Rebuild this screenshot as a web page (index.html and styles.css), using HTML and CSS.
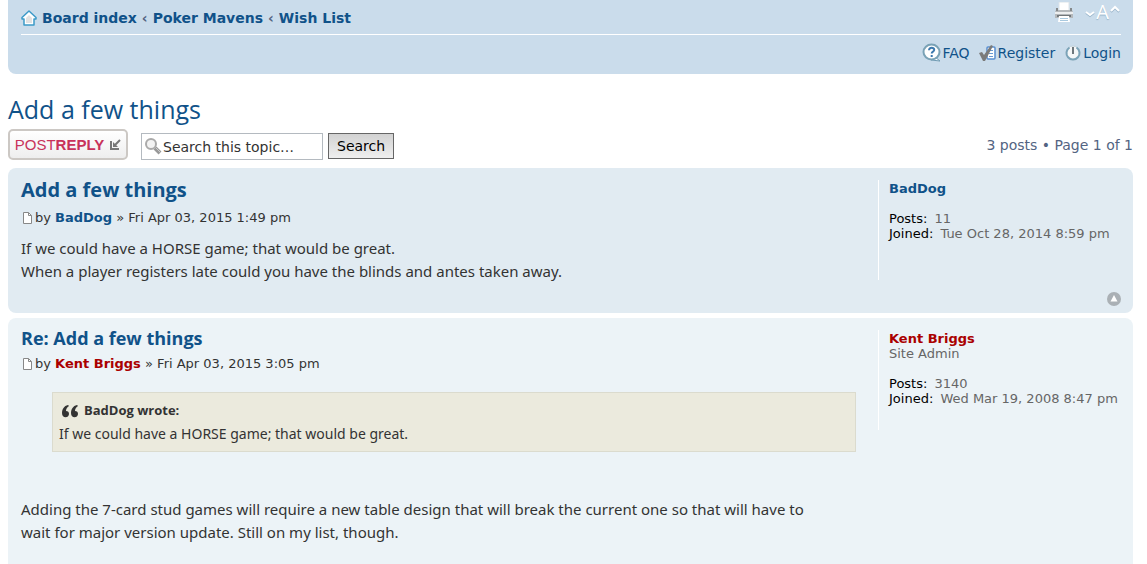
FILE: index.html
```html
<!DOCTYPE html>
<html lang="en">
<head>
    <meta charset="UTF-8">
    <meta name="viewport" content="width=device-width, initial-scale=1.0">
    <title>Add a few things</title>
    <link rel="stylesheet" href="styles.css">
</head>
<body>
    <!-- Navigation -->
    <div class="navbar">
        <div class="nav-row nav-top">
            <div class="breadcrumbs">
                <svg width="16" height="16" viewBox="0 0 16 16">
                    <path d="M8 1L1 7.500V9h2v6h10V9h2V7.500z" fill="#fff" stroke="#3c9ac8" stroke-width="1.500" stroke-linejoin="round"/>
                    <path d="M8 5l-3 3v5h6V8z" fill="#e2e2e2"/>
                </svg>
                <a href="#">Board index</a> <span>‹</span> <a href="#">Poker Mavens</a> <span>‹</span> <a href="#">Wish List</a>
            </div>
            <div class="tools">
                <a href="#" aria-label="Print view">
                    <svg width="20" height="20" viewBox="0 0 20 20">
                        <path d="M5 0h10v9H5z" fill="#fff" stroke="#dce3e8"/>
                        <path d="M2 8h16l1 2v6H1v-6z" fill="#b4b8bb"/>
                        <path d="M1 10h18v2H1z" fill="#eceeef"/>
                        <path d="M3 13h14v2H3z" fill="#707679"/>
                        <path d="M5 14h10l1 6H4z" fill="#fff"/>
                        <path d="M6 16.500h8M6 18.500h8" stroke="#a9c9df"/>
                        <path d="M2 6h2v3H2zM16 6h2v3h-2z" fill="#85898b"/>
                    </svg>
                </a>
                <a href="#" class="font-size" aria-label="Change font size">
                    <svg width="12" height="20" viewBox="0 0 12 20"><path d="M2 11l4 3 4-3" fill="none" stroke="#98b4ca" stroke-width="2"/><path d="M2 10l4 3 4-3" fill="none" stroke="#fff" stroke-width="2"/></svg>
                    <span>A</span>
                    <svg width="12" height="20" viewBox="0 0 12 20"><path d="M2 10l4-4 4 4" fill="none" stroke="#98b4ca" stroke-width="2"/><path d="M2 9l4-4 4 4" fill="none" stroke="#fff" stroke-width="2"/></svg>
                </a>
            </div>
        </div>
        <div class="nav-row nav-links">
            <a href="#">
                <svg width="20" height="20" viewBox="0 0 20 20">
                    <path d="M13 14l5 4-9-1z" fill="#fff" stroke="#6f9bb3"/>
                    <ellipse cx="9.500" cy="9" rx="8" ry="7.500" fill="#fff" stroke="#7aa2b6" stroke-width="2"/>
                    <path d="M7 7.200c0-3.300 5.500-3 5.200-.2-.2 1.700-2.500 1.600-2.500 3.500M9.700 12v2" fill="none" stroke="#3d79ae" stroke-width="2"/>
                </svg>FAQ</a>
            <a href="#">
                <svg width="20" height="20" viewBox="0 0 20 20">
                    <rect x="9" y="4" width="8" height="12" rx="1" fill="#fff" stroke="#5a8fd0" stroke-width="1.500"/>
                    <path d="M11 7.500h4M11 10.500h4M11 13.500h4" stroke="#6899d3"/>
                    <path d="M1 10l3-1 2 3 7-10 2 1L7 18H5z" fill="#7b7b7b"/>
                </svg>Register</a>
            <a href="#">
                <svg width="20" height="20" viewBox="0 0 20 20">
                    <circle cx="10" cy="10" r="7" fill="#f5f7f8" stroke="#c2d2da"/>
                    <path d="M6.500 4.500a6.500 6.500 0 1 0 7 0" fill="none" stroke="#7ba3b8" stroke-width="2"/>
                    <path d="M10 4v7" stroke="#6e777c" stroke-width="2"/>
                </svg>Login</a>
        </div>
    </div>

    <h2><a href="#">Add a few things</a></h2>

    <!-- Topic actions -->
    <div class="topic-actions">
        <button type="button" class="reply-button"><span>POST<b>REPLY</b></span>
            <svg width="12" height="12" viewBox="0 0 12 12"><path d="M2 2v8h8" fill="none" stroke="#777" stroke-width="2"/><path d="M4 3v5h5z" fill="#777"/><path d="M5 7l6-6" stroke="#777" stroke-width="2"/></svg>
        </button>
        <form class="search" onsubmit="return false;">
            <div class="search-box">
                <svg width="18" height="18" viewBox="0 0 18 18">
                    <path d="M11 10l5 5" stroke="#999" stroke-width="4"/>
                    <path d="M12 10l4 4" stroke="#ccc"/>
                    <circle cx="7" cy="6" r="5" fill="#f3f3f3" stroke="#aaa" stroke-width="2"/>
                </svg>
                <input type="text" aria-label="Search this topic" value="Search this topic…">
            </div>
            <button type="submit" class="search-button">Search</button>
        </form>
        <div class="pagination">3 posts • Page 1 of 1</div>
    </div>

    <!-- Posts -->
    <div class="post">
        <div class="postbody">
            <h3 class="first"><a href="#">Add a few things</a></h3>
            <p class="author"><svg width="14" height="12" viewBox="0 0 14 12"><path d="M2.500.500h5l3 3v8h-8z" fill="#fff" stroke="#888"/><path d="M7.500.500v3h3" fill="none" stroke="#888"/></svg>by <a href="#">BadDog</a> » Fri Apr 03, 2015 1:49 pm</p>
            <div class="content">If we could have a HORSE game; that would be great.<br>When a player registers late could you have the blinds and antes taken away.</div>
        </div>
        <div class="side">
            <div class="profile">
                <a href="#">BadDog</a>
                <p><strong>Posts:</strong> 11<br><strong>Joined:</strong> Tue Oct 28, 2014 8:59 pm</p>
            </div>
            <a href="#" class="back-top" aria-label="Top">
                <svg width="14" height="14" viewBox="0 0 14 14"><circle cx="7" cy="7" r="7" fill="#aab0b5"/><path d="M7 3L3.500 9.500h7z" fill="#fff"/></svg>
            </a>
        </div>
    </div>

    <div class="post reply">
        <div class="postbody">
            <h3><a href="#">Re: Add a few things</a></h3>
            <p class="author"><svg width="14" height="12" viewBox="0 0 14 12"><path d="M2.500.500h5l3 3v8h-8z" fill="#fff" stroke="#888"/><path d="M7.500.500v3h3" fill="none" stroke="#888"/></svg>by <a href="#" class="admin">Kent Briggs</a> » Fri Apr 03, 2015 3:05 pm</p>
            <div class="content">
                <blockquote>
                    <cite><svg width="18" height="14" viewBox="0 0 18 14"><path d="M7 1C3 2 1 5 1 9c0 6 7 5 7 1 0-2-1-3-3-3 0-2 1-4 3-5zM16 1c-4 1-6 4-6 8 0 6 7 5 7 1 0-2-1-3-3-3 0-2 1-4 3-5z" fill="#333"/></svg>BadDog wrote:</cite>
                    If we could have a HORSE game; that would be great.
                </blockquote>
                Adding the 7-card stud games will require a new table design that will break the current one so that will have to<br>
                wait for major version update. Still on my list, though.
            </div>
        </div>
        <div class="side">
            <div class="profile">
                <a href="#" class="admin">Kent Briggs</a><br>Site Admin
                <p><strong>Posts:</strong> 3140<br><strong>Joined:</strong> Wed Mar 19, 2008 8:47 pm</p>
            </div>
        </div>
    </div>
</body>
</html>
```

FILE: styles.css
```css
* {
    box-sizing: border-box;
}
body {
    display: flex;
    flex-direction: column;
    min-height: 100vh;
    margin: 0;
    padding: 0 14px 0 8px;
    background-color: #fff;
    color: #536482;
    font-family: Verdana, "DejaVu Sans", sans-serif;
    font-size: 13px;
}
a {
    color: #105289;
    text-decoration: none;
}
a:hover {
    color: #d31141;
    text-decoration: underline;
}
svg {
    display: block;
    flex: none;
}
.navbar {
    padding: 0 12px 0 13px;
    background-color: #cadceb;
    border-radius: 0 0 8px 8px;
}
.nav-row {
    display: flex;
    align-items: center;
}
.nav-top {
    justify-content: space-between;
    height: 35px;
    border-bottom: 1px solid #fff;
}
.breadcrumbs {
    display: flex;
    align-items: center;
    gap: 5px;
    padding-top: 1px;
    font-size: 14px;
    font-weight: bold;
}
.tools {
    display: flex;
    align-items: center;
    gap: 10px;
    padding-bottom: 10px;
}
.font-size {
    display: flex;
    align-items: center;
    color: #fff;
    font-family: "Open Sans", sans-serif;
    font-size: 20px;
    line-height: 20px;
    text-shadow: 0 1px 1px #98b4ca;
}
.nav-links {
    justify-content: flex-end;
    gap: 8px;
    height: 39px;
    padding-bottom: 4px;
    font-size: 14px;
}
.nav-links a {
    display: flex;
    align-items: center;
}
h2 {
    margin: 19px 0 4px;
    font-family: "Trebuchet MS", "Open Sans", sans-serif;
    font-size: 25px;
    font-weight: normal;
    line-height: 32px;
}
.topic-actions {
    display: flex;
    align-items: center;
    height: 31px;
    margin-bottom: 8px;
}
.reply-button {
    display: flex;
    align-items: center;
    justify-content: center;
    gap: 5px;
    width: 120px;
    height: 31px;
    margin-right: 13px;
    padding: 0;
    border: 2px solid #ccc8c4;
    border-radius: 5px;
    background: linear-gradient(#fff, #eee);
    color: #c8325a;
    font-family: "Liberation Sans", Arial, sans-serif;
    font-size: 15px;
}
.search {
    display: flex;
    gap: 5px;
    margin-top: 4px;
}
.search-box {
    display: flex;
    align-items: center;
    width: 182px;
    height: 27px;
    padding-left: 2px;
    border: 1px solid #b4bac0;
}
.search-box input {
    width: 100%;
    padding: 0 0 0 1px;
    border: 0;
    outline: 0;
    color: #333;
    font-family: inherit;
    font-size: 14px;
}
.search-button {
    height: 26px;
    padding: 0 8px;
    border: 1px solid #666;
    background: linear-gradient(#d2d2d2, #efefef);
    color: #000;
    font-family: inherit;
    font-size: 14px;
}
.pagination {
    margin-left: auto;
    font-size: 14px;
}
.post {
    display: flex;
    min-height: 145px;
    margin-bottom: 5px;
    padding: 8px 0 7px 13px;
    border-radius: 8px;
    background-color: #e1ebf2;
}
.reply {
    flex: 1;
    margin-bottom: 0;
    border-radius: 8px 8px 0 0;
    background-color: #ecf3f7;
}
.postbody {
    flex: 1;
    padding-right: 22px;
}
h3 {
    margin: 0;
    font-family: "Trebuchet MS", "Open Sans", sans-serif;
    font-size: 18px;
    line-height: 24px;
}
h3.first {
    font-size: 20px;
    line-height: 28px;
}
.author {
    display: flex;
    align-items: center;
    margin: 5px 0 10px;
    color: #333;
    line-height: 18px;
    white-space: pre;
}
.author a {
    font-weight: bold;
}
.content {
    color: #333;
    font-family: "Trebuchet MS", "Noto Sans", sans-serif;
    font-size: 15px;
    line-height: 23px;
}
blockquote {
    margin: 19px 0 46px 31px;
    padding: 6px;
    border: 1px solid #dbdbce;
    background-color: #ebeadd;
    font-size: 14px;
}
cite {
    display: flex;
    align-items: center;
    gap: 5px;
    padding-left: 2px;
    font-family: "Trebuchet MS", "Open Sans", sans-serif;
    font-size: 13px;
    font-style: normal;
    font-weight: bold;
}
.side {
    display: flex;
    flex-direction: column;
    width: 255px;
}
.profile {
    min-height: 100px;
    margin-top: 4px;
    padding: 1px 0 0 10px;
    border-left: 1px solid #fff;
    color: #666;
    line-height: 15px;
}
.profile > a {
    font-weight: bold;
}
.profile p {
    margin: 15px 0 0;
}
.profile strong {
    margin-right: 3px;
    color: #000;
    font-weight: normal;
}
a.admin {
    color: #a00;
}
.back-top {
    align-self: flex-end;
    margin: auto 12px 0 0;
}
```
